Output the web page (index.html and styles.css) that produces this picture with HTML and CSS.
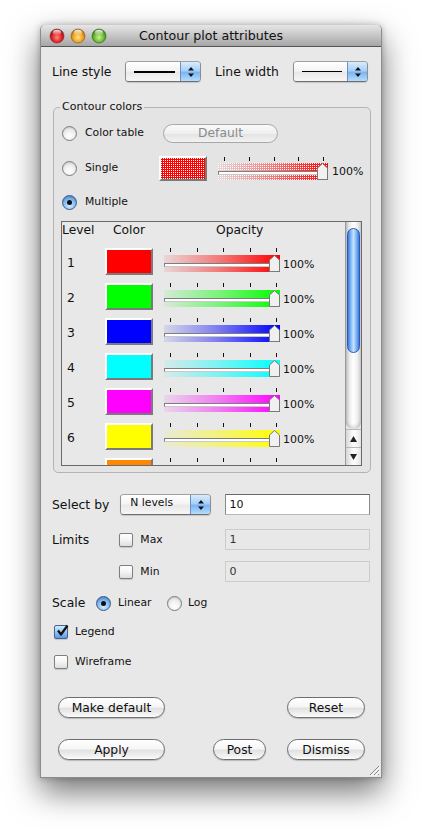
FILE: index.html
```html
<!DOCTYPE html>
<html>
<head>
<meta charset="utf-8">
<title>Contour plot attributes</title>
<link rel="stylesheet" href="styles.css">
</head>
<body>
<div class="window">
  <div class="titlebar">
    <div class="lights">
      <svg width="58" height="16" viewBox="0 0 58 16">
        <defs>
          <radialGradient id="gr" cx="50%" cy="60%" r="55%"><stop offset="0" stop-color="#ff8a80"/><stop offset="0.6" stop-color="#e2262b"/><stop offset="1" stop-color="#9a0f12"/></radialGradient>
          <radialGradient id="go" cx="50%" cy="60%" r="55%"><stop offset="0" stop-color="#ffe58a"/><stop offset="0.6" stop-color="#f2a626"/><stop offset="1" stop-color="#b86a0c"/></radialGradient>
          <radialGradient id="gg" cx="50%" cy="60%" r="55%"><stop offset="0" stop-color="#c8f29a"/><stop offset="0.6" stop-color="#6fbe38"/><stop offset="1" stop-color="#3a7d18"/></radialGradient>
          <linearGradient id="hl" x1="0" y1="0" x2="0" y2="1"><stop offset="0" stop-color="#fff" stop-opacity="0.9"/><stop offset="1" stop-color="#fff" stop-opacity="0"/></linearGradient>
        </defs>
        <circle cx="8" cy="8" r="7" fill="url(#gr)" stroke="#7a2a2a" stroke-width="0.6"/>
        <ellipse cx="8" cy="4.6" rx="4.2" ry="2.8" fill="url(#hl)"/>
        <circle cx="29" cy="8" r="7" fill="url(#go)" stroke="#8a5a18" stroke-width="0.6"/>
        <ellipse cx="29" cy="4.6" rx="4.2" ry="2.8" fill="url(#hl)"/>
        <circle cx="50" cy="8" r="7" fill="url(#gg)" stroke="#2f6a16" stroke-width="0.6"/>
        <ellipse cx="50" cy="4.6" rx="4.2" ry="2.8" fill="url(#hl)"/>
      </svg>
    </div>
    <div class="title">Contour plot attributes</div>
  </div>

  <div class="content">
    <div class="row row-line">
      <span class="lbl lbl-ls">Line style</span>
      <div class="popup popup-ls">
        <div class="popup-face"><span class="line-sample thick"></span></div>
        <div class="popup-arrows"><svg width="8" height="12" viewBox="0 0 8 12"><path d="M4 1 L7 4.5 H1 Z M4 11 L7 7.5 H1 Z" fill="#111"/></svg></div>
      </div>
      <span class="lbl lbl-lw">Line width</span>
      <div class="popup popup-lw">
        <div class="popup-face"><span class="line-sample thin"></span></div>
        <div class="popup-arrows"><svg width="8" height="12" viewBox="0 0 8 12"><path d="M4 1 L7 4.5 H1 Z M4 11 L7 7.5 H1 Z" fill="#111"/></svg></div>
      </div>
    </div>

    <fieldset class="group">
      <legend>Contour colors</legend>

      <div class="opt-row opt-table">
        <div class="opt-label"><span class="radio"></span><span class="small">Color table</span></div>
        <div class="btn btn-disabled btn-default">Default</div>
      </div>

      <div class="opt-row opt-single">
        <div class="opt-label"><span class="radio"></span><span class="small">Single</span></div>
        <div class="swatch swatch-stipple">
          <svg width="44" height="21" viewBox="0 0 44 21" shape-rendering="crispEdges">
            <defs>
              <pattern id="dots" width="2" height="2" patternUnits="userSpaceOnUse">
                <rect x="0" y="0" width="1" height="1" fill="#ffffff"/>
              </pattern>
            </defs>
            <rect width="44" height="21" fill="#ff0000"/>
            <rect width="44" height="21" fill="url(#dots)"/>
          </svg>
        </div>
        <div class="slider slider-single">
          <div class="ticks"><i></i><i></i><i></i><i></i><i></i></div>
          <div class="bar bar-stipple">
            <svg width="110" height="17" viewBox="0 0 110 17" shape-rendering="crispEdges">
              <defs>
                <linearGradient id="sg" x1="0" y1="0" x2="1" y2="0">
                  <stop offset="0" stop-color="#ff0000" stop-opacity="0.05"/>
                  <stop offset="0.5" stop-color="#ff0000" stop-opacity="0.45"/>
                  <stop offset="1" stop-color="#ff0000" stop-opacity="1"/>
                </linearGradient>
                <pattern id="dots2" width="2" height="2" patternUnits="userSpaceOnUse">
                  <rect x="0" y="0" width="1" height="1" fill="#ffffff"/>
                </pattern>
              </defs>
              <rect width="110" height="17" fill="url(#sg)"/>
              <rect width="110" height="17" fill="url(#dots2)"/>
            </svg>
            <span class="groove"></span>
            <svg class="thumb" width="11" height="17" viewBox="0 0 11 17"><path d="M0.5 16.5 V5 L5.5 0.5 L10.5 5 V16.5 Z" fill="#f2f2f2" stroke="#7a7a7a"/></svg>
          </div>
        </div>
        <span class="pct">100%</span>
      </div>

      <div class="opt-row opt-multi">
        <div class="opt-label"><span class="radio on"></span><span class="small">Multiple</span></div>
      </div>

      <div class="table-frame">
        <div class="table-body">
          <div class="thead">
            <span class="th th-level">Level</span>
            <span class="th th-color">Color</span>
            <span class="th th-opacity">Opacity</span>
          </div>

          <div class="trow">
            <span class="lvl">1</span>
            <span class="swatch" style="background:#ff0000"></span>
            <div class="slider">
              <div class="ticks"><i></i><i></i><i></i><i></i><i></i></div>
              <div class="bar" style="--c: 255,0,0"><span class="groove"></span><svg class="thumb" width="11" height="17" viewBox="0 0 11 17"><path d="M0.5 16.5 V5 L5.5 0.5 L10.5 5 V16.5 Z" fill="#f0f0f0" stroke="#7a7a7a"/></svg></div>
            </div>
            <span class="pct">100%</span>
          </div>

          <div class="trow">
            <span class="lvl">2</span>
            <span class="swatch" style="background:#00ff00"></span>
            <div class="slider">
              <div class="ticks"><i></i><i></i><i></i><i></i><i></i></div>
              <div class="bar" style="--c: 0,255,0"><span class="groove"></span><svg class="thumb" width="11" height="17" viewBox="0 0 11 17"><path d="M0.5 16.5 V5 L5.5 0.5 L10.5 5 V16.5 Z" fill="#f0f0f0" stroke="#7a7a7a"/></svg></div>
            </div>
            <span class="pct">100%</span>
          </div>

          <div class="trow">
            <span class="lvl">3</span>
            <span class="swatch" style="background:#0000ff"></span>
            <div class="slider">
              <div class="ticks"><i></i><i></i><i></i><i></i><i></i></div>
              <div class="bar" style="--c: 0,0,255"><span class="groove"></span><svg class="thumb" width="11" height="17" viewBox="0 0 11 17"><path d="M0.5 16.5 V5 L5.5 0.5 L10.5 5 V16.5 Z" fill="#f0f0f0" stroke="#7a7a7a"/></svg></div>
            </div>
            <span class="pct">100%</span>
          </div>

          <div class="trow">
            <span class="lvl">4</span>
            <span class="swatch" style="background:#00ffff"></span>
            <div class="slider">
              <div class="ticks"><i></i><i></i><i></i><i></i><i></i></div>
              <div class="bar" style="--c: 0,255,255"><span class="groove"></span><svg class="thumb" width="11" height="17" viewBox="0 0 11 17"><path d="M0.5 16.5 V5 L5.5 0.5 L10.5 5 V16.5 Z" fill="#f0f0f0" stroke="#7a7a7a"/></svg></div>
            </div>
            <span class="pct">100%</span>
          </div>

          <div class="trow">
            <span class="lvl">5</span>
            <span class="swatch" style="background:#ff00ff"></span>
            <div class="slider">
              <div class="ticks"><i></i><i></i><i></i><i></i><i></i></div>
              <div class="bar" style="--c: 255,0,255"><span class="groove"></span><svg class="thumb" width="11" height="17" viewBox="0 0 11 17"><path d="M0.5 16.5 V5 L5.5 0.5 L10.5 5 V16.5 Z" fill="#f0f0f0" stroke="#7a7a7a"/></svg></div>
            </div>
            <span class="pct">100%</span>
          </div>

          <div class="trow">
            <span class="lvl">6</span>
            <span class="swatch" style="background:#ffff00"></span>
            <div class="slider">
              <div class="ticks"><i></i><i></i><i></i><i></i><i></i></div>
              <div class="bar" style="--c: 255,255,0"><span class="groove"></span><svg class="thumb" width="11" height="17" viewBox="0 0 11 17"><path d="M0.5 16.5 V5 L5.5 0.5 L10.5 5 V16.5 Z" fill="#f0f0f0" stroke="#7a7a7a"/></svg></div>
            </div>
            <span class="pct">100%</span>
          </div>

          <div class="trow">
            <span class="lvl"></span>
            <span class="swatch" style="background:#ff8800"></span>
            <div class="slider">
              <div class="ticks"><i></i><i></i><i></i><i></i><i></i></div>
              <div class="bar" style="--c: 255,136,0"></div>
            </div>
          </div>
        </div>

        <div class="scrollbar">
          <div class="sb-track">
            <div class="sb-thumb"></div>
          </div>
          <div class="sb-btn"><svg width="9" height="8" viewBox="0 0 9 8"><path d="M4.5 1 L8 7 H1 Z" fill="#222"/></svg></div>
          <div class="sb-btn"><svg width="9" height="8" viewBox="0 0 9 8"><path d="M4.5 7 L8 1 H1 Z" fill="#222"/></svg></div>
        </div>
      </div>
    </fieldset>

    <div class="row row-select">
      <span class="lbl lbl-sel">Select by</span>
      <div class="popup popup-sel">
        <div class="popup-face"><span class="small">N levels</span></div>
        <div class="popup-arrows"><svg width="8" height="12" viewBox="0 0 8 12"><path d="M4 1 L7 4.5 H1 Z M4 11 L7 7.5 H1 Z" fill="#111"/></svg></div>
      </div>
      <div class="field">10</div>
    </div>

    <div class="row row-max">
      <span class="lbl lbl-lim">Limits</span>
      <span class="check"></span>
      <span class="small chk-lbl">Max</span>
      <div class="field field-off">1</div>
    </div>

    <div class="row row-min">
      <span class="lbl lbl-lim"></span>
      <span class="check"></span>
      <span class="small chk-lbl">Min</span>
      <div class="field field-off">0</div>
    </div>

    <div class="row row-scale">
      <span class="lbl lbl-scale">Scale</span>
      <span class="radio on"></span>
      <span class="small scale-lin">Linear</span>
      <span class="radio"></span>
      <span class="small scale-log">Log</span>
    </div>

    <div class="row row-legend">
      <span class="check on"><svg width="14" height="14" viewBox="0 0 14 14"><path d="M3 6.5 L6 10.5 L12.5 1.5" fill="none" stroke="#111" stroke-width="2.2" stroke-linejoin="round"/></svg></span>
      <span class="small cb-lbl">Legend</span>
    </div>

    <div class="row row-wire">
      <span class="check"></span>
      <span class="small cb-lbl">Wireframe</span>
    </div>

    <div class="row row-btn1">
      <div class="btn btn-wide">Make default</div>
      <div class="spacer"></div>
      <div class="btn btn-mid">Reset</div>
    </div>

    <div class="row row-btn2">
      <div class="btn btn-wide">Apply</div>
      <div class="spacer"></div>
      <div class="btn btn-post">Post</div>
      <div class="btn btn-mid btn-dismiss">Dismiss</div>
    </div>
  </div>

  <svg class="grip" width="12" height="12" viewBox="0 0 12 12">
    <path d="M11 2 L2 11 M11 6 L6 11 M11 10 L10 11" stroke="#8a8a8a" stroke-width="1"/>
    <path d="M12 3 L3 12 M12 7 L7 12" stroke="#fff" stroke-width="1"/>
  </svg>
</div>
</body>
</html>
```

FILE: styles.css
```css
* { box-sizing: border-box; }

html, body {
  margin: 0;
  padding: 0;
  background: #ffffff;
}

body {
  width: 423px;
  height: 834px;
  overflow: hidden;
  font-family: "DejaVu Sans", "Liberation Sans", sans-serif;
  font-size: 12.4px;
  color: #111;
}

.window {
  position: relative;
  margin: 25px 0 0 40px;
  width: 342px;
  height: 753px;
  background: #e8e8e8;
  border: 1px solid #8c8c8c;
  border-top: none;
  border-radius: 5px 5px 0 0;
  box-shadow: 0 14px 32px rgba(0, 0, 0, 0.55), 0 0 6px rgba(0, 0, 0, 0.25);
  display: flex;
  flex-direction: column;
}

.titlebar {
  height: 22px;
  border-radius: 5px 5px 0 0;
  background: linear-gradient(#e6e6e6, #c6c6c6 50%, #a6a6a6);
  border-bottom: 1px solid #555;
  display: flex;
  align-items: center;
  position: relative;
}

.lights {
  position: absolute;
  left: 8px;
  top: 3px;
  line-height: 0;
}

.title {
  flex: 1;
  text-align: center;
  font-size: 12.6px;
  line-height: 21px;
  color: #111;
}

.content {
  padding: 0 11px;
  display: flex;
  flex-direction: column;
}

.row {
  display: flex;
  align-items: center;
}

.lbl { font-size: 12.4px; line-height: 16px; }
.small { font-size: 10.8px; line-height: 14px; }

.row-line { margin-top: 14px; height: 21px; }
.lbl-ls { width: 73px; }
.lbl-lw { width: 78px; margin-left: 14px; }

/* popups */
.popup {
  height: 21px;
  display: flex;
  border: 1px solid #8e8e8e;
  border-top-color: #a0a0a0;
  border-bottom-color: #6e6e6e;
  border-radius: 4px;
  overflow: hidden;
  box-shadow: 0 1px 1px rgba(0,0,0,0.15);
}
.popup-ls { width: 76px; }
.popup-lw { width: 75px; }
.popup-sel { width: 92px; }

.popup-face {
  flex: 1;
  background: linear-gradient(#ffffff, #f4f4f4 45%, #e9e9e9 55%, #f6f6f6);
  display: flex;
  align-items: center;
  padding-left: 8px;
}
.popup-sel .popup-face { padding-left: 9px; align-items: flex-start; padding-top: 1px; }

.popup-arrows {
  width: 20px;
  border-left: 1px solid #6f8fb8;
  background: linear-gradient(#d8ecfd, #a8d0f8 45%, #7ab6f4 55%, #b7dcfc);
  display: flex;
  align-items: center;
  justify-content: center;
}

.line-sample { display: block; background: #000; }
.line-sample.thick { width: 41px; height: 2px; }
.line-sample.thin { width: 40px; height: 1px; }

/* group box */
.group {
  margin: 18px 0 0 1px;
  width: 318px;
  padding: 0 0 6px 0;
  border: 1px solid #b4b4b4;
  border-radius: 5px;
  background: #e4e4e4;
}
.group legend {
  font-size: 11px;
  line-height: 14px;
  margin-left: 6px;
  padding: 0 2px;
}

.opt-row {
  display: flex;
  align-items: center;
  padding-left: 8px;
}
.opt-table { margin-top: 9px; height: 20px; }
.opt-single { margin-top: 12px; height: 26px; }
.opt-multi { margin-top: 11px; height: 20px; }

.opt-label {
  width: 97px;
  display: flex;
  align-items: center;
  gap: 8px;
}

.radio {
  width: 15px;
  height: 15px;
  border-radius: 50%;
  border: 1px solid #7c7c7c;
  background: radial-gradient(circle at 50% 70%, #ffffff 0, #f2f2f2 40%, #d4d4d4 100%);
  box-shadow: inset 0 1px 1px rgba(0,0,0,0.1);
  flex: none;
  display: flex;
  align-items: center;
  justify-content: center;
}
.radio.on {
  border-color: #3c5a86;
  background: radial-gradient(circle at 50% 75%, #d4ecff 0, #8cc0f0 45%, #3d7ed0 100%);
}
.radio.on::after {
  content: "";
  width: 5px;
  height: 5px;
  border-radius: 50%;
  background: #111;
}

.btn {
  height: 21px;
  border: 1px solid #6e6e6e;
  border-radius: 11px;
  background: linear-gradient(#ffffff, #f6f6f6 45%, #e2e2e2 55%, #f4f4f4 90%, #ffffff);
  box-shadow: 0 1px 1px rgba(0,0,0,0.2);
  display: flex;
  align-items: center;
  justify-content: center;
  font-size: 12.3px;
  line-height: 16px;
}
.btn-disabled {
  color: #8a8a8a;
  border-color: #a8a8a8;
  box-shadow: none;
  background: linear-gradient(#fafafa, #efefef 50%, #e4e4e4 55%, #f2f2f2);
}
.btn-default { width: 115px; height: 19px; margin-left: 4px; }

.swatch {
  width: 48px;
  height: 27px;
  flex: none;
  border-style: solid;
  border-width: 2px;
  border-color: #ffffff #7a7a7a #7a7a7a #ffffff;
}
.swatch-stipple {
  height: 25px;
  line-height: 0;
  overflow: hidden;
}

/* sliders */
.slider {
  width: 116px;
  flex: none;
  display: flex;
  flex-direction: column;
}
.ticks {
  height: 4px;
  display: flex;
  justify-content: space-between;
  padding: 0 3px 0 6px;
}
.ticks i {
  display: block;
  width: 1px;
  height: 4px;
  background: #111;
}
.bar {
  position: relative;
  margin-top: 3px;
  height: 17px;
  background: linear-gradient(to right, rgba(var(--c), 0.08), rgba(var(--c), 0.45) 45%, rgba(var(--c), 0.85) 85%, rgb(var(--c)));
}
.bar-stipple {
  background: none;
  margin-top: 2px;
  line-height: 0;
}
.groove {
  position: absolute;
  left: 0;
  top: 8px;
  width: 106px;
  height: 4px;
  border-top: 1px solid #7e7e7e;
  border-left: 1px solid #7e7e7e;
  border-bottom: 1px solid #c8c8c8;
  background: #ffffff;
}
.thumb {
  position: absolute;
  left: 105px;
  top: 0;
}
.slider-single { width: 110px; margin-left: 11px; }
.slider-single .ticks { padding: 0 4px 0 6px; }
.slider-single .groove { width: 100px; }
.slider-single .thumb { left: 99px; }

.pct {
  font-size: 11px;
  line-height: 14px;
  margin-left: 3px;
  margin-top: 10px;
}
.opt-single .pct { margin-left: 4px; margin-top: 7px; }

/* table */
.table-frame {
  margin: 9px 0 0 7px;
  width: 301px;
  height: 245px;
  border: 1px solid #6a6a6a;
  display: flex;
  background: #e8e8e8;
}
.table-body {
  flex: 1;
  overflow: hidden;
  border-right: 1px solid #9a9a9a;
}
.thead {
  height: 23px;
  display: flex;
  align-items: flex-start;
}
.th { font-size: 12.3px; line-height: 17px; }
.th-level { width: 51px; }
.th-color { width: 103px; }

.trow {
  height: 35px;
  flex: none;
  display: flex;
  align-items: flex-start;
  padding-top: 3px;
}
.lvl {
  width: 43px;
  padding-left: 5px;
  font-size: 12.4px;
  line-height: 16px;
  margin-top: 7px;
}
.trow .swatch { margin-right: 11px; }

.scrollbar {
  width: 15px;
  display: flex;
  flex-direction: column;
}
.sb-track {
  flex: 1;
  padding: 6px 1px 0 1px;
  background: linear-gradient(to right, #c4c4c4, #eeeeee 25%, #ffffff 50%, #f0f0f0 75%, #cfcfcf);
  border-bottom-left-radius: 7px;
  border-bottom-right-radius: 7px;
  box-shadow: inset 0 -3px 3px rgba(0,0,0,0.12);
}
.sb-thumb {
  height: 125px;
  border-radius: 7px;
  border: 1px solid #2a5ab8;
  background: linear-gradient(to right, #3d78e0, #8fc0fa 30%, #c6e2ff 50%, #8cc0fa 70%, #3f7ae0);
}
.sb-btn {
  height: 18px;
  border-top: 1px solid #b8b8b8;
  background: linear-gradient(to right, #d6d6d6, #f6f6f6 40%, #ffffff 55%, #e4e4e4);
  display: flex;
  align-items: center;
  justify-content: center;
}

/* lower section */
.row-select { margin-top: 21px; height: 21px; }
.lbl-sel { width: 69px; }
.field {
  margin-left: 14px;
  width: 146px;
  height: 21px;
  background: #ffffff;
  border: 1px solid #8a8a8a;
  border-top-color: #6a6a6a;
  border-bottom-color: #b8b8b8;
  font-size: 11px;
  line-height: 19px;
  padding-left: 3px;
}

.row-max { margin-top: 14px; height: 21px; }
.row-min { margin-top: 11px; height: 21px; }
.lbl-lim { width: 68px; }
.check {
  width: 14px;
  height: 14px;
  flex: none;
  border: 1px solid #7e7e7e;
  border-radius: 2px;
  background: linear-gradient(#ffffff, #f4f4f4 50%, #dedede);
  box-shadow: 0 1px 1px rgba(0,0,0,0.15);
  line-height: 0;
  overflow: visible;
}
.check.on {
  border-color: #44638f;
  background: linear-gradient(#d4eafe, #98c6f4 50%, #5c9ae6);
}
.check.on svg { margin: -2px 0 0 0; }
.chk-lbl { width: 86px; margin-left: 7px; }
.row-max .field, .row-min .field { margin-left: 0; }
.field-off {
  background: #e8e8e8;
  border: 1px solid #cccccc;
  color: #333;
}

.row-scale { margin-top: 11px; height: 20px; }
.lbl-scale { width: 44px; }
.scale-lin { width: 49px; margin-left: 7px; }
.scale-log { margin-left: 6px; }

.row-legend { margin-top: 9px; height: 20px; padding-left: 2px; }
.row-wire { margin-top: 10px; height: 20px; padding-left: 2px; }
.cb-lbl { margin-left: 7px; }

.row-btn1 { margin-top: 25px; height: 21px; padding: 0 5px 0 6px; }
.row-btn2 { margin-top: 21px; height: 21px; padding: 0 5px 0 6px; }
.spacer { flex: 1; }
.btn-wide { width: 107px; }
.btn-mid { width: 78px; }
.btn-post { width: 53px; margin-right: 21px; }

.grip {
  position: absolute;
  right: 1px;
  bottom: 1px;
}
```
